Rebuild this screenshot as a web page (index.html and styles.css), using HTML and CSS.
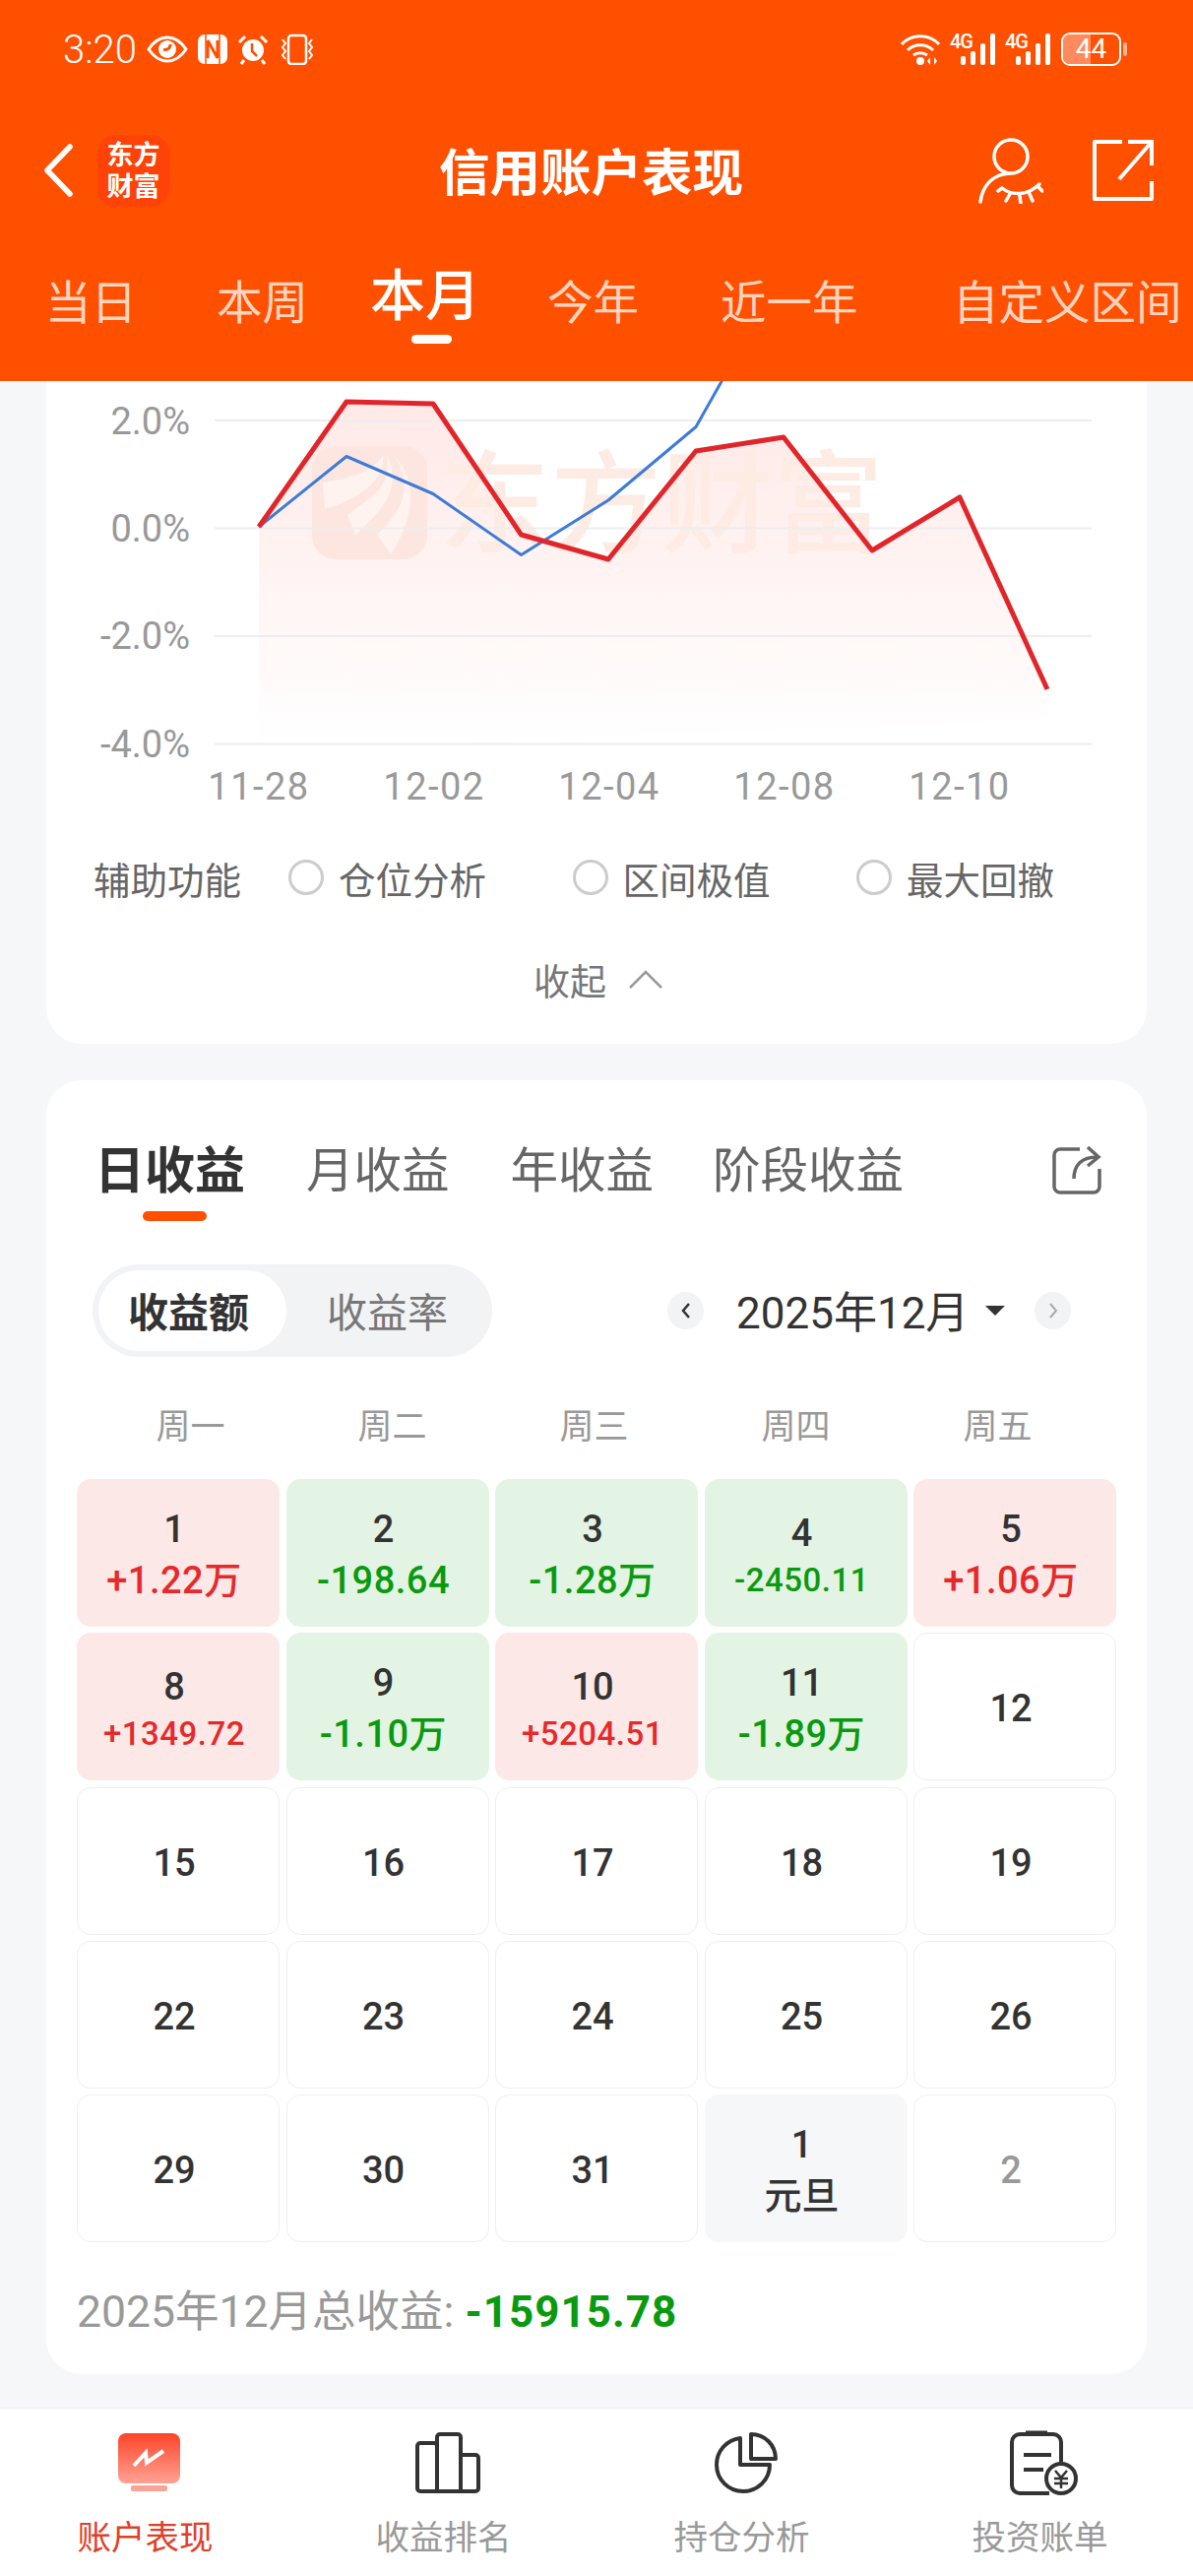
FILE: index.html
```html
<!DOCTYPE html>
<html lang="zh-CN">
<head>
  <meta charset="UTF-8">
  <meta name="viewport" content="width=device-width, initial-scale=1.0">
  <title>信用账户表现</title>
  <link rel="stylesheet" href="styles.css">
</head>
<body>
  <header class="top">
    <div class="status">
      <div class="status-left">
        <span class="time">3:20</span>
        <svg width="42" height="30" viewBox="0 0 42 30"><path d="M2 15C8 6 14 3 21 3s13 3 19 12c-6 9-12 12-19 12S8 24 2 15z" fill="none" stroke="#fff" stroke-width="3"/><circle cx="21" cy="15" r="9" fill="#fff"/><path d="M17 15a5 5 0 0 0 7-5" fill="none" stroke="#ff5000" stroke-width="3"/></svg>
        <svg width="30" height="30" viewBox="0 0 30 30"><rect x="0" y="0" width="30" height="30" rx="7" fill="#fff"/><path d="M8 0v30M22 0v30" stroke="#ff5000" stroke-width="1.5"/><path d="M10 6l10 18M10 6v18M20 6v18" fill="none" stroke="#ff5000" stroke-width="3"/></svg>
        <svg width="32" height="32" viewBox="0 0 32 32"><circle cx="16" cy="17" r="11" fill="#fff"/><path d="M15 10v8l5 5" fill="none" stroke="#ff5000" stroke-width="2.5"/><path d="M2 9l6-6M30 9l-6-6M7 27l-3 4M25 27l3 4" stroke="#fff" stroke-width="3" fill="none"/></svg>
        <svg width="38" height="32" viewBox="0 0 38 32"><rect x="10" y="2" width="18" height="29" rx="3" fill="none" stroke="#fff" stroke-width="2.5"/><path d="M4 6l3 4-3 4 3 4-3 4 3 4M34 6l-3 4 3 4-3 4 3 4-3 4" fill="none" stroke="#fff" stroke-width="2"/></svg>
      </div>
      <div class="status-right">
        <svg width="40" height="32" viewBox="0 0 40 32"><path d="M1 11C11 0 29 0 39 11M7 17c7-7 19-7 26 0M13 22c4-3 10-3 14 0" fill="none" stroke="#fff" stroke-width="3"/><circle cx="20" cy="28" r="4" fill="#fff"/><path d="M30 24v8l-3-4zM34 24v8l3-4z" fill="#fff"/></svg>
        <div class="signal"><span class="signal-tag">4G</span><i class="b1"></i><i class="b2"></i><i class="b3"></i><i class="b4"></i></div>
        <div class="signal"><span class="signal-tag">4G</span><i class="b1"></i><i class="b2"></i><i class="b3"></i><i class="b4"></i></div>
        <div class="battery"><div class="battery-fill"></div><span class="battery-num">44</span></div>
        <span class="battery-nub"></span>
      </div>
    </div>

    <div class="nav">
      <div class="nav-left">
        <svg width="30" height="54" viewBox="0 0 30 54"><path d="M27 3L4 27l23 24" fill="none" stroke="#fff" stroke-width="5.5" stroke-linecap="round" stroke-linejoin="round"/></svg>
        <div class="logo">东方<br>财富</div>
      </div>
      <h1 class="title">信用账户表现</h1>
      <div class="nav-right">
        <svg width="66" height="68" viewBox="0 0 66 68"><circle cx="33" cy="20" r="17" fill="none" stroke="#fff" stroke-width="3.5"/><path d="M32 37C14 38 4 50 2 66" fill="none" stroke="#fff" stroke-width="3.5" stroke-linecap="round"/><path d="M24 52c10 8 26 8 38-4M32 58l-4 7M42 60l1 8M52 58l3 7M60 50l5 5M24 52l-4 3" fill="none" stroke="#fff" stroke-width="3.5" stroke-linecap="round"/></svg>
        <svg width="62" height="62" viewBox="0 0 62 62"><path d="M30 2H2v58h58V42" fill="none" stroke="#fff" stroke-width="4" stroke-linejoin="round"/><path d="M60 26V2H36M60 2L27 40" fill="none" stroke="#fff" stroke-width="4"/></svg>
      </div>
    </div>

    <nav class="periods">
      <span class="period">当日</span>
      <span class="period">本周</span>
      <span class="period period-on">本月</span>
      <span class="period">今年</span>
      <span class="period">近一年</span>
      <span class="period">自定义区间</span>
    </nav>
  </header>

  <section class="card card-chart">
    <svg class="chart" viewBox="47 387 1118 443" width="1118" height="443">
      <defs>
        <linearGradient id="areaFill" x1="0" y1="0" x2="0" y2="1">
          <stop offset="0" stop-color="#ffe9e7"/>
          <stop offset="1" stop-color="#fff"/>
        </linearGradient>
      </defs>
      <polygon fill="url(#areaFill)" points="263,535 352,408 440,410 529,543 618,568 707,458 796,444 886,559 975,505 1064,700 1064,730 263,760"/>
      <g class="watermark">
        <rect class="mark-box" x="317" y="453" width="117" height="115" rx="24"/>
        <path class="mark-leaf" d="M328 490C347 487 375 483 389 463C391 483 375 503 330 517Z"/>
        <path class="mark-leaf" d="M353 523C367 510 399 500 393 463C411 497 383 523 361 543Z"/>
        <path class="mark-leaf" d="M383 543C403 523 423 500 401 463C423 487 423 523 397 563Z"/>
        <text x="446" y="552" class="mark-text">东方财富</text>
      </g>
      <g class="grid-lines">
        <line x1="218" y1="427" x2="1109" y2="427"/>
        <line x1="218" y1="536.5" x2="1109" y2="536.5"/>
        <line x1="218" y1="646" x2="1109" y2="646"/>
        <line x1="218" y1="755.5" x2="1109" y2="755.5"/>
      </g>
      <polyline class="line-blue" points="263,535 352,463.5 440,501.5 529.5,563.5 618,508 707,433.5 740,375"/>
      <polyline class="line-red" points="263,535 352,408 440,410 529.5,543 618,568 707,458 796,444 886,559 975,505 1064,700"/>
      <g class="axis-y">
        <text x="193" y="441">2.0%</text>
        <text x="193" y="550">0.0%</text>
        <text x="193" y="659">-2.0%</text>
        <text x="193" y="769">-4.0%</text>
      </g>
      <g class="axis-x">
        <text x="263" y="812">11-28</text>
        <text x="441" y="812">12-02</text>
        <text x="619" y="812">12-04</text>
        <text x="797" y="812">12-08</text>
        <text x="975" y="812">12-10</text>
      </g>
    </svg>

    <div class="aux">
      <span class="aux-label">辅助功能</span>
      <label class="aux-item"><i class="radio"></i>仓位分析</label>
      <label class="aux-item"><i class="radio"></i>区间极值</label>
      <label class="aux-item"><i class="radio"></i>最大回撤</label>
    </div>

    <div class="collapse">
      <span>收起</span>
      <svg width="36" height="20" viewBox="0 0 36 20"><path d="M2 18L18 2l16 16" fill="none" stroke="#999" stroke-width="2.5"/></svg>
    </div>
  </section>

  <section class="card card-cal">
    <div class="cal-tabs">
      <span class="cal-tab cal-tab-on">日收益</span>
      <span class="cal-tab">月收益</span>
      <span class="cal-tab">年收益</span>
      <span class="cal-tab">阶段收益</span>
      <svg class="cal-share" width="50" height="50" viewBox="0 0 50 50"><path d="M28 4H8a6 6 0 0 0-6 6v32a6 6 0 0 0 6 6h34a6 6 0 0 0 6-6V24" fill="none" stroke="#666" stroke-width="3.5"/><path d="M22 34c0-14 8-22 24-22M36 2l11 10-11 9" fill="none" stroke="#666" stroke-width="3.5"/></svg>
    </div>

    <div class="cal-tools">
      <div class="seg">
        <span class="seg-item seg-on">收益额</span>
        <span class="seg-item">收益率</span>
      </div>
      <div class="month">
        <span class="month-btn"><svg width="12" height="18" viewBox="0 0 12 18"><path d="M9 2L3 9l6 7" fill="none" stroke="#333" stroke-width="2.5"/></svg></span>
        <span class="month-text">2025年12月</span>
        <i class="month-caret"></i>
        <span class="month-btn"><svg width="12" height="18" viewBox="0 0 12 18"><path d="M3 2l6 7-6 7" fill="none" stroke="#aaa" stroke-width="2"/></svg></span>
      </div>
    </div>

    <div class="weekdays">
      <span>周一</span><span>周二</span><span>周三</span><span>周四</span><span>周五</span>
    </div>

    <div class="cal-grid">
      <div class="day up"><b>1</b><em>+1.22万</em></div>
      <div class="day down"><b>2</b><em>-198.64</em></div>
      <div class="day down"><b>3</b><em>-1.28万</em></div>
      <div class="day down"><b>4</b><em class="small">-2450.11</em></div>
      <div class="day up"><b>5</b><em>+1.06万</em></div>

      <div class="day up"><b>8</b><em class="small">+1349.72</em></div>
      <div class="day down"><b>9</b><em>-1.10万</em></div>
      <div class="day up"><b>10</b><em class="small">+5204.51</em></div>
      <div class="day down"><b>11</b><em>-1.89万</em></div>
      <div class="day"><b>12</b></div>

      <div class="day"><b>15</b></div>
      <div class="day"><b>16</b></div>
      <div class="day"><b>17</b></div>
      <div class="day"><b>18</b></div>
      <div class="day"><b>19</b></div>

      <div class="day"><b>22</b></div>
      <div class="day"><b>23</b></div>
      <div class="day"><b>24</b></div>
      <div class="day"><b>25</b></div>
      <div class="day"><b>26</b></div>

      <div class="day"><b>29</b></div>
      <div class="day"><b>30</b></div>
      <div class="day"><b>31</b></div>
      <div class="day holiday"><b>1</b><em>元旦</em></div>
      <div class="day next"><b>2</b></div>
    </div>

    <p class="total">2025年12月总收益: <strong>-15915.78</strong></p>
  </section>

  <footer class="tabbar">
    <div class="tabbar-item tabbar-on">
      <svg width="64" height="60" viewBox="0 0 64 60">
        <defs><linearGradient id="navRed" x1="0" y1="0" x2="0" y2="1"><stop offset="0" stop-color="#ff4428"/><stop offset="1" stop-color="#ffa394"/></linearGradient></defs>
        <rect x="0" y="0" width="63" height="51" rx="8" fill="url(#navRed)"/>
        <rect x="13" y="53" width="37" height="6" rx="2" fill="#fba397"/>
        <path d="M16 33l12-13 1 10 17-12" fill="none" stroke="#fff" stroke-width="4"/>
      </svg>
      <span>账户表现</span>
    </div>
    <div class="tabbar-item">
      <svg width="66" height="62" viewBox="0 0 66 62"><path d="M22 60V14a3 3 0 0 0-3-3H5a3 3 0 0 0-3 3v43a3 3 0 0 0 3 3zM22 60h24V5a3 3 0 0 0-3-3H25a3 3 0 0 0-3 3zM46 60h15a3 3 0 0 0 3-3V26a3 3 0 0 0-3-3H46" fill="none" stroke="#333" stroke-width="4" stroke-linejoin="round"/></svg>
      <span>收益排名</span>
    </div>
    <div class="tabbar-item">
      <svg width="64" height="62" viewBox="0 0 64 62"><path d="M26 6C12 8 2 19 2 33c0 15 12 27 27 27s27-12 27-27H26z" fill="none" stroke="#333" stroke-width="4" stroke-linejoin="round"/><path d="M37 2c14 0 25 11 25 25H37z" fill="none" stroke="#333" stroke-width="4" stroke-linejoin="round"/></svg>
      <span>持仓分析</span>
    </div>
    <div class="tabbar-item">
      <svg width="70" height="66" viewBox="0 0 70 66"><path d="M40 64H10a8 8 0 0 1-8-8V12a8 8 0 0 1 8-8h34a8 8 0 0 1 8 8v20" fill="none" stroke="#333" stroke-width="4"/><path d="M16 3h22" stroke="#333" stroke-width="5"/><path d="M14 25h28M14 40h20" stroke="#333" stroke-width="4"/><circle cx="52" cy="49" r="15" fill="#fff" stroke="#333" stroke-width="4"/><path d="M46 41l6 7 6-7M45 49h14M45 54h14M52 48v11" fill="none" stroke="#333" stroke-width="2.5"/></svg>
      <span>投资账单</span>
    </div>
  </footer>
</body>
</html>
```

FILE: styles.css
```css
* {
  box-sizing: border-box;
}

body {
  margin: 0;
  width: 1212px;
  height: 2616px;
  overflow: hidden;
  background-color: #f6f7f9;
  font-family: Roboto, "Noto Sans CJK SC", sans-serif;
  color: #333;
}

/* orange header */
.top {
  height: 387px;
  background-color: #ff5000;
  color: #fff;
}

.status {
  height: 100px;
  padding: 0 67px 0 64px;
  display: flex;
  align-items: center;
  justify-content: space-between;
}

.status-left {
  display: flex;
  align-items: center;
  gap: 10px;
}

.time {
  font-size: 40px;
  font-weight: 300;
}

.status-right {
  display: flex;
  align-items: center;
  gap: 10px;
}

.signal {
  position: relative;
  width: 46px;
  height: 32px;
  display: flex;
  align-items: flex-end;
  justify-content: flex-end;
  gap: 5px;
}

.signal i {
  width: 5px;
  background-color: #fff;
  border-radius: 2px;
}

.signal .b1 { height: 9px; }
.signal .b2 { height: 14px; }
.signal .b3 { height: 22px; }
.signal .b4 { height: 32px; }

.signal-tag {
  position: absolute;
  left: 0;
  top: -1px;
  font-size: 20px;
  font-weight: 500;
  line-height: 18px;
  letter-spacing: -1px;
}

.battery {
  position: relative;
  width: 61px;
  height: 34px;
  border: 2px solid #fff;
  border-radius: 9px;
  overflow: hidden;
  margin-left: 1px;
}

.battery-fill {
  width: 28px;
  height: 100%;
  background-color: #ff8a5c;
}

.battery-num {
  position: absolute;
  top: 0;
  left: 0;
  right: 0;
  text-align: center;
  font-size: 28px;
  line-height: 30px;
}

.battery-nub {
  width: 4px;
  height: 14px;
  margin-left: -8px;
  background-color: #ffb08e;
  border-radius: 2px;
}

.nav {
  height: 146px;
  padding-left: 44px;
  display: grid;
  grid-template-columns: 402px auto 1fr;
  align-items: center;
}

.nav-left {
  display: flex;
  align-items: center;
  gap: 25px;
}

.logo {
  width: 73px;
  height: 73px;
  border-radius: 18px;
  background-color: #ff4308;
  font-weight: 700;
  font-size: 27px;
  line-height: 32px;
  text-align: center;
  padding-top: 5px;
}

.title {
  margin: 0 0 3px;
  font-size: 51.5px;
  font-weight: 700;
  white-space: nowrap;
}

.nav-right {
  display: flex;
  justify-content: flex-end;
  align-items: center;
  gap: 50px;
  padding-right: 40px;
}

.periods {
  height: 118px;
  padding-left: 46px;
  display: grid;
  grid-template-columns: 174px 159px 177px 176px 236px auto;
  align-items: center;
}

.period {
  font-size: 46.5px;
  color: #ffd4bf;
  white-space: nowrap;
  padding-bottom: 3px;
}

.period-on {
  position: relative;
  font-size: 56px;
  font-weight: 500;
  color: #fff;
  margin: -16px 0 0 -3px;
}

.period-on::after {
  content: "";
  position: absolute;
  left: 42px;
  bottom: -10px;
  width: 41px;
  height: 9px;
  background-color: #fff;
  border-radius: 5px;
}

/* cards */
.card {
  margin: 0 47px;
  background-color: #fff;
}

.card-chart {
  height: 673px;
  border-radius: 0 0 36px 36px;
}

.chart {
  display: block;
}

.mark-box {
  fill: #fde6e0;
}

.mark-leaf {
  fill: #fff3f0;
}

.mark-text {
  font-size: 113px;
  font-weight: 500;
  fill: #fdebe4;
}

.grid-lines line {
  stroke: #eceef0;
  stroke-width: 2;
}

.line-red {
  fill: none;
  stroke: #e1262b;
  stroke-width: 5;
  stroke-linejoin: round;
}

.line-blue {
  fill: none;
  stroke: #3f7bd6;
  stroke-width: 3;
  stroke-linejoin: round;
}

.axis-y text {
  font-size: 38px;
  fill: #999;
  text-anchor: end;
}

.axis-x text {
  font-size: 38px;
  fill: #999;
  text-anchor: middle;
  letter-spacing: 1.5px;
}

.aux {
  margin-top: 36px;
  height: 50px;
  padding-left: 48px;
  display: flex;
  align-items: center;
  gap: 87.5px;
  font-size: 37.5px;
  color: #666;
}

.aux-label {
  margin-right: -39.5px;
}

.aux-item {
  display: flex;
  align-items: center;
  gap: 15px;
}

.radio {
  width: 36px;
  height: 36px;
  border: 3px solid #ccc;
  border-radius: 50%;
}

.collapse {
  margin-top: 54px;
  height: 50px;
  padding-left: 495px;
  display: flex;
  align-items: center;
  gap: 22px;
  font-size: 37px;
  color: #777;
}

.card-cal {
  margin-top: 37px;
  height: 1314px;
  padding-top: 57px;
  border-radius: 36px;
}

.cal-tabs {
  height: 62px;
  padding-left: 49px;
  display: flex;
  align-items: center;
  gap: 60px;
  position: relative;
}

.cal-tab {
  font-size: 48.5px;
  color: #666;
  white-space: nowrap;
}

.cal-tab-on {
  position: relative;
  font-size: 51px;
  font-weight: 700;
  color: #333;
  margin-right: 2px;
}

.cal-tab:nth-child(2) {
  margin-right: 2px;
}

.cal-tab-on::after {
  content: "";
  position: absolute;
  left: 49px;
  top: 82px;
  width: 65px;
  height: 10px;
  background-color: #ff5000;
  border-radius: 5px;
}

.cal-share {
  position: absolute;
  right: 46px;
  top: 9px;
}

.cal-tools {
  margin-top: 68px;
  padding-left: 47px;
  display: flex;
  align-items: center;
}

.seg {
  width: 406px;
  height: 94px;
  padding: 6px;
  background-color: #f2f3f5;
  border-radius: 47px;
  display: flex;
  align-items: center;
  font-size: 41px;
  color: #777;
}

.seg-item {
  width: 191px;
  height: 82px;
  padding-bottom: 3px;
  border-radius: 41px;
  display: flex;
  align-items: center;
  justify-content: center;
  flex: none;
}

.seg-item + .seg-item {
  margin-left: 3px;
  padding-left: 8px;
}

.seg-on {
  padding-right: 8px;
  background-color: #fff;
  font-weight: 700;
  color: #333;
}

.month {
  margin-left: 178px;
  display: flex;
  align-items: center;
}

.month-btn {
  width: 37px;
  height: 38px;
  border-radius: 50%;
  background-color: #f2f3f5;
  display: flex;
  align-items: center;
  justify-content: center;
}

.month-text {
  margin: 0 0 3px 33px;
  font-size: 44px;
  white-space: nowrap;
}

.month-caret {
  margin: 0 30px 0 17px;
  border-left: 10px solid transparent;
  border-right: 10px solid transparent;
  border-top: 10px solid #333;
}

.weekdays {
  margin: 42px 49px 0 44px;
  height: 50px;
  display: grid;
  grid-template-columns: repeat(5, 1fr);
  align-items: center;
  text-align: center;
  font-size: 35px;
  color: #999;
}

.cal-grid {
  margin: 32px 0 0 31px;
  width: 1056px;
  display: grid;
  grid-template-columns: repeat(5, 206px);
  grid-auto-rows: 150px;
  gap: 6.3px 6.5px;
}

.day {
  padding: 4px 8px 0 0;
  border: 1.5px solid #eeeff1;
  border-radius: 14px;
  display: flex;
  flex-direction: column;
  align-items: center;
  justify-content: center;
}

.day b {
  font-size: 38px;
  line-height: 52px;
  font-weight: 500;
}

.day em {
  font-style: normal;
  font-size: 38px;
  line-height: 52px;
  font-weight: 500;
  letter-spacing: 0.5px;
  white-space: nowrap;
}

.day em.small {
  font-size: 33px;
  line-height: 44px;
}

.up {
  background-color: #fde8e8;
  border-color: #fde8e8;
}

.up em {
  color: #e42b2b;
}

.down {
  background-color: #e3f4e4;
  border-color: #e3f4e4;
}

.down em {
  color: #0a9a0f;
}

.holiday {
  background-color: #f6f7f9;
  border-color: #f6f7f9;
}

.holiday em {
  font-size: 38px;
  letter-spacing: 0;
}

.next b {
  color: #999;
}

.total {
  margin: 41px 0 0 31px;
  height: 60px;
  line-height: 60px;
  font-size: 44.5px;
  color: #999;
  white-space: nowrap;
}

.total strong {
  font-size: 44px;
  font-weight: 700;
  color: #0a9a0f;
  letter-spacing: 1px;
}

/* bottom bar */
.tabbar {
  position: absolute;
  left: 0;
  right: 0;
  top: 2445px;
  height: 171px;
  background-color: #fff;
  border-top: 1px solid #ebecee;
  display: grid;
  grid-template-columns: repeat(4, 303px);
  padding-top: 22px;
}

.tabbar-item {
  display: flex;
  flex-direction: column;
  align-items: center;
  font-size: 34.5px;
  color: #999;
}

.tabbar-item svg {
  height: 66px;
}

.tabbar-item span {
  position: relative;
  left: -4px;
  margin-top: 19px;
  line-height: 48px;
}

.tabbar-on span {
  color: #e0402a;
}
```
